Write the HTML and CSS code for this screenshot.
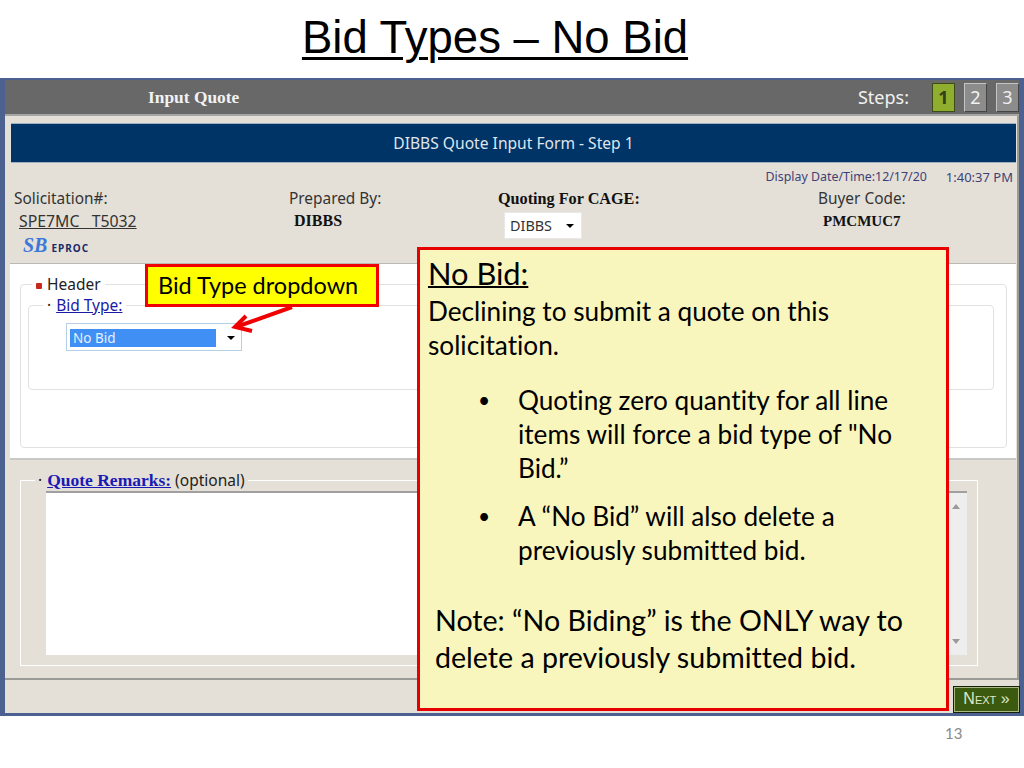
FILE: index.html
```html
<!DOCTYPE html>
<html lang="en">
<head>
  <meta charset="UTF-8" />
  <title>Bid Types - No Bid</title>
  <link rel="stylesheet" href="styles.css">
</head>
<body>
  <h1 class="slide-title">Bid Types – No Bid</h1>

  <div class="frame">
    <div class="topbar">
      <div class="topbar-title">Input Quote</div>
      <div class="steps">
        <span class="steps-label">Steps:</span>
        <span class="step step-on">1</span>
        <span class="step">2</span>
        <span class="step">3</span>
      </div>
    </div>

    <div class="body">
      <div class="form-title">DIBBS Quote Input Form - Step 1</div>

      <div class="info">
        <div class="display-time"><span>Display Date/Time:12/17/20</span><span class="time">1:40:37 PM</span></div>
        <div class="info-col col-sol">
          <div>Solicitation#:</div>
          <a class="sol-link">SPE7MC&nbsp;&nbsp;&nbsp;T5032</a>
          <div class="logo"><span class="logo-sb">SB</span> <span class="logo-eproc">EPROC</span></div>
        </div>
        <div class="info-col col-prep">
          <div>Prepared By:</div>
          <div class="val">DIBBS</div>
        </div>
        <div class="info-col col-cage">
          <div class="val">Quoting For CAGE:</div>
          <div class="cage-select">DIBBS <span class="caret"></span></div>
        </div>
        <div class="info-col col-buyer">
          <div>Buyer Code:</div>
          <div class="val">PMCMUC7</div>
        </div>
      </div>

      <div class="header-panel">
        <fieldset class="group group-header">
          <legend><span class="red-dot"></span>Header</legend>
          <fieldset class="group group-bid">
            <legend>·<a>Bid Type:</a></legend>
            <div class="bid-select"><span class="bid-value">No Bid</span><span class="caret"></span></div>
          </fieldset>
        </fieldset>
      </div>

      <div class="remarks-panel">
        <fieldset class="group group-remarks">
          <legend>·<a class="remarks-link">Quote Remarks:</a> (optional)</legend>
          <div class="remarks-box">
            <div class="scrollbar">
              <span class="arrow-up"></span>
              <span class="arrow-down"></span>
            </div>
          </div>
        </fieldset>
      </div>
    </div>

    <div class="footer">
      <div class="next-btn">Next »</div>
    </div>
  </div>

  <div class="slide-num">13</div>

  <div class="callout-small">Bid Type dropdown</div>
  <svg class="arrow" width="70" height="30" viewBox="0 0 70 30">
    <path d="M62 1 L6 21" stroke="#f00000" stroke-width="4" fill="none" />
    <path d="M16 10 L5 21 L22 25" stroke="#f00000" stroke-width="4" fill="none" />
  </svg>

  <div class="callout">
    <div class="callout-head">No Bid:</div>
    <p class="callout-lead">Declining to submit a quote on this solicitation.</p>
    <ul class="callout-list">
      <li>Quoting zero quantity for all line items will force a bid type of "No Bid.”</li>
      <li>A “No Bid” will also delete a previously submitted bid.</li>
    </ul>
    <p class="callout-note">Note: “No Biding” is the ONLY way to delete a previously submitted bid.</p>
  </div>
</body>
</html>
```

FILE: styles.css
```css
* {
  margin: 0;
  padding: 0;
  box-sizing: border-box;
}
body {
  width: 1024px;
  height: 768px;
  position: relative;
  overflow: hidden;
  background: #fff;
  font-family: "Noto Sans", sans-serif;
  color: #222;
}
.slide-title {
  height: 78px;
  padding: 10px 34px 0 0;
  text-align: center;
  font-family: "Liberation Sans", sans-serif;
  font-weight: normal;
  font-size: 45.5px;
  line-height: 56px;
  color: #000;
  text-decoration: underline;
  text-decoration-thickness: 3px;
  text-underline-offset: 4px;
}
.frame {
  height: 638px;
  background: #e4e0d8;
  border: 5px solid #4d6191;
  border-top-width: 2px;
  border-bottom-width: 3px;
  display: flex;
  flex-direction: column;
}
.topbar {
  height: 36px;
  flex: none;
  background: #686868;
  border-bottom: 2px solid #a6a6a6;
  display: flex;
  justify-content: space-between;
  align-items: center;
  color: #f2f2f2;
}
.topbar-title {
  padding-left: 143px;
  font-family: "Liberation Serif", serif;
  font-weight: bold;
  font-size: 17.4px;
}
.steps {
  display: flex;
  align-items: center;
  gap: 9px;
  font-size: 18px;
}
.steps-label {
  margin-right: 14px;
}
.step {
  width: 23px;
  height: 29px;
  background: #8c8c8c;
  border: 1px solid #454545;
  border-color: #c4c4c4 #454545 #454545 #c4c4c4;
  text-align: center;
  line-height: 27px;
}
.step-on {
  background: #8fae2e;
  color: #33401a;
  font-weight: bold;
  border-color: #3d4a1a;
}
.body {
  flex: 1;
  padding: 7px 2px 0 5px;
  border-bottom: 2px solid #9a9a96;
  border-right: 2px solid #9a9a96;
  background: #e4e0d8;
  display: flex;
  flex-direction: column;
  min-height: 0;
}
.form-title {
  height: 40px;
  flex: none;
  margin: 0 -1px 0 1px;
  background: #003366;
  color: #dfe6ee;
  text-align: center;
  font-size: 15.6px;
  line-height: 38px;
  border-top: 1px solid #9fb0c0;
  border-bottom: 1px solid #9fb0c0;
}
.info {
  height: 100px;
  flex: none;
  position: relative;
  display: flex;
  font-size: 15.4px;
  line-height: 22px;
  color: #333;
}
.display-time {
  position: absolute;
  top: 3px;
  right: 2px;
  font-size: 12.4px;
  color: #3f3f77;
  display: flex;
  gap: 19px;
}
.time {
  font-size: 13px;
}
.info-col {
  padding-top: 25px;
}
.col-sol {
  width: 275px;
  margin-left: 4px;
}
.sol-link {
  display: block;
  margin-left: 5px;
  font-size: 15.8px;
  text-decoration: underline;
}
.logo {
  margin-left: 9px;
  line-height: 26px;
}
.logo-sb {
  font-family: "Liberation Serif", serif;
  font-style: italic;
  font-weight: bold;
  font-size: 20px;
  color: #3d78d8;
}
.logo-eproc {
  font-size: 10px;
  font-weight: bold;
  color: #1c2a66;
  letter-spacing: 1px;
}
.col-prep {
  width: 209px;
}
.val {
  font-family: "Liberation Serif", serif;
  font-weight: bold;
  font-size: 16px;
  color: #111;
  padding-left: 5px;
}
.col-cage {
  width: 320px;
}
.col-cage .val {
  padding-left: 0;
  font-size: 16.2px;
}
.cage-select {
  width: 78px;
  height: 27px;
  margin: 2px 0 0 6px;
  background: #fff;
  border: 1px solid #e8e8e8;
  font-size: 14.4px;
  line-height: 27px;
  padding-left: 5px;
  display: flex;
  align-items: center;
  gap: 14px;
}
.caret {
  width: 0;
  height: 0;
  border-left: 4px solid transparent;
  border-right: 4px solid transparent;
  border-top: 4px solid #000;
}
.col-buyer .val {
  padding-left: 5px;
  font-size: 15px;
}
.header-panel {
  height: 197px;
  flex: none;
  background: #fff;
  border-top: 1px solid #b8b8b4;
  border-bottom: 2px solid #c8c8c4;
  padding: 11px 9px 0 10px;
  margin-right: -1px;
}
fieldset.group {
  border: 1px solid #e2e2e2;
  border-radius: 4px;
}
.group legend {
  font-size: 15.5px;
  line-height: 18px;
}
.group-header {
  height: 173px;
}
.group-header > legend {
  margin-left: 11px;
  padding: 0 4px;
}
.red-dot {
  display: inline-block;
  width: 6px;
  height: 6px;
  margin: 0 5px 1px 0;
  background: #c8281e;
  border-radius: 1px;
}
.group-bid {
  height: 94px;
  margin: 3px 12px 0 7px;
}
.group-bid > legend {
  margin-left: 14px;
  padding: 0 4px;
}
.group-bid a {
  margin-left: 5px;
  color: #1a1aa6;
  text-decoration: underline;
}
.bid-select {
  width: 176px;
  height: 28px;
  margin: 9px 0 0 37px;
  background: #fff;
  border: 1px solid #b4cfe6;
  padding: 5px 3px 3px;
  display: flex;
  align-items: center;
  gap: 11px;
}
.bid-value {
  width: 146px;
  height: 18px;
  background: #3f8ff5;
  color: #e6f0ff;
  font-size: 13.5px;
  line-height: 19px;
  padding-left: 3px;
}
.remarks-panel {
  flex: 1;
  padding: 11px 37px 0 10px;
  min-height: 0;
}
.group-remarks {
  height: 195px;
  padding: 0 10px 0 25px;
}
fieldset.group-remarks {
  border-radius: 0;
  border-color: #fff;
}
.group-remarks > legend {
  margin-left: -11px;
  padding: 0 3px;
}
.remarks-link {
  margin-left: 5px;
  font-family: "Liberation Serif", serif;
  font-weight: bold;
  font-size: 17.5px;
  color: #1a1ab4;
  text-decoration: underline;
}
.remarks-box {
  height: 164px;
  margin-top: 2px;
  background: #fff;
  border-top: 2px solid #a0a0a0;
  display: flex;
  justify-content: flex-end;
}
.scrollbar {
  width: 22px;
  background: #eeeeee;
  display: flex;
  flex-direction: column;
  justify-content: space-between;
  align-items: center;
  padding: 11px 0;
}
.arrow-up {
  border-left: 4px solid transparent;
  border-right: 4px solid transparent;
  border-bottom: 5px solid #9a9a9a;
}
.arrow-down {
  border-left: 4px solid transparent;
  border-right: 4px solid transparent;
  border-top: 5px solid #9a9a9a;
}
.footer {
  height: 33px;
  flex: none;
  display: flex;
  justify-content: flex-end;
  align-items: flex-end;
  margin-right: -1px;
}
.next-btn {
  width: 67px;
  height: 27px;
  background: #3c5a0f;
  border: 1px solid #15200a;
  outline: 1px solid #a8b880;
  outline-offset: -2px;
  color: #dfe8c8;
  text-align: center;
  font-family: "Liberation Sans", sans-serif;
  font-size: 16px;
  line-height: 24px;
  font-variant: small-caps;
}
.slide-num {
  position: absolute;
  top: 724px;
  left: 945px;
  font-family: Lato, sans-serif;
  font-size: 15px;
  color: #8a8a8a;
}
.callout-small {
  position: absolute;
  left: 145px;
  top: 264px;
  width: 234px;
  height: 43px;
  background: #ffff00;
  border: 3px solid #f00000;
  padding-left: 10px;
  font-family: Lato, sans-serif;
  font-size: 23.5px;
  line-height: 37px;
  color: #000;
}
.arrow {
  position: absolute;
  left: 230px;
  top: 306px;
}
.callout {
  position: absolute;
  left: 417px;
  top: 247px;
  width: 532px;
  height: 464px;
  background: #f9f6bd;
  border: 3px solid #e80000;
  padding: 5px 8px;
  font-family: Lato, sans-serif;
  font-variant-ligatures: none;
  font-size: 26.2px;
  line-height: 34px;
  color: #000;
}
.callout-head {
  font-size: 30.8px;
  line-height: 38px;
  text-decoration: underline;
  text-decoration-thickness: 2px;
}
.callout-lead {
  margin-top: 1px;
}
.callout-list {
  margin-top: 21px;
  padding-left: 90px;
  padding-right: 30px;
  list-style: none;
}
.callout-list li {
  position: relative;
  margin-bottom: 14px;
}
.callout-list li::before {
  content: "•";
  position: absolute;
  left: -40px;
  font-size: 21px;
}
.callout-note {
  margin: 35px 0 0 7px;
  font-size: 28.6px;
  line-height: 37px;
}
```
